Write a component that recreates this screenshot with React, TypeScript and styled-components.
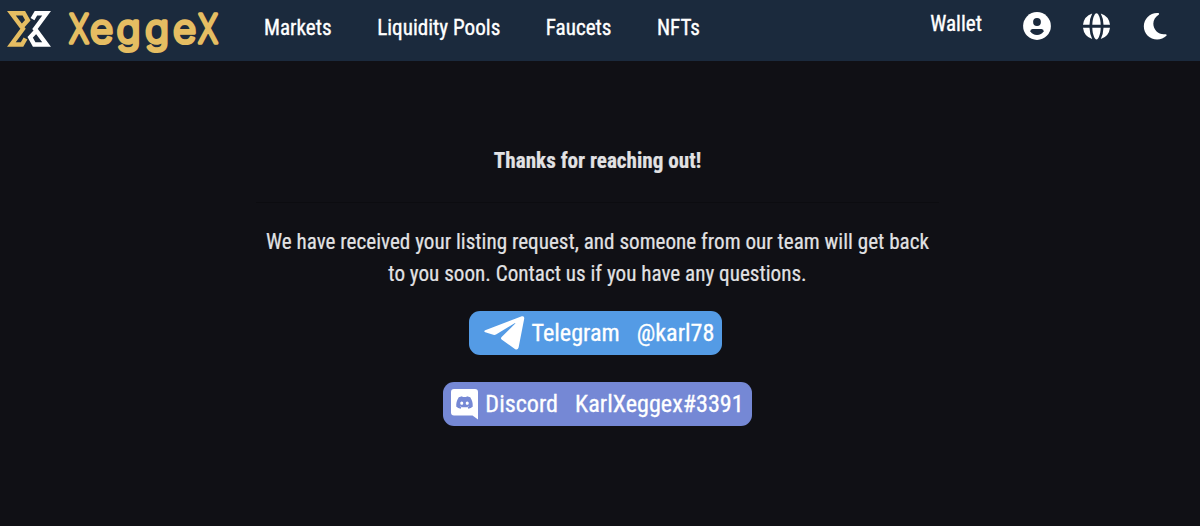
import styled, { createGlobalStyle } from 'styled-components';
import { FaDiscord } from 'react-icons/fa';
import { FaMoon } from 'react-icons/fa6';

const markPath = 'M15.200 15.500L20.800 9.300L16.800 2.200H4.400L16 17.800L4.400 33.500H15L18.500 27.500';

function LogoMark() {
  return (
    <svg width="44" height="36" viewBox="0 0 44 36" fill="none" strokeWidth="4.4">
      <path stroke="#e5bd62" d={markPath} />
      <path stroke="#fff" transform="rotate(180 22 17.85)" d={markPath} />
    </svg>
  );
}

function UserIcon() {
  return (
    <svg width="28" height="28" viewBox="0 0 28 28">
      <circle cx="14" cy="14" r="13.900" fill="#fff" />
      <circle cx="14" cy="10" r="3.900" fill="#1b2a3d" />
      <path fill="#1b2a3d" d="M9.500 17H18.500Q21 17.300 20.600 19.200Q18.500 23 14 23Q9.500 23 7.400 19.200Q7 17.300 9.500 17Z" />
    </svg>
  );
}

function GlobeIcon() {
  return (
    <svg width="27" height="27" viewBox="0 0 27 27" fill="#fff">
      <path d="M0 11.800A13.500 13.500 0 0 1 9.200 0.500Q6.800 5 6.500 11.800Z" />
      <path d="M27 11.800A13.500 13.500 0 0 0 17.800 0.500Q20.200 5 20.500 11.800Z" />
      <path d="M9.300 11.800C9.500 5 11.500 0.200 13.500 0.200S17.500 5 17.700 11.800Z" />
      <path d="M0 14.800A13.500 13.500 0 0 0 9.200 26.100Q6.800 21.500 6.500 14.800Z" />
      <path d="M27 14.800A13.500 13.500 0 0 1 17.800 26.100Q20.200 21.500 20.500 14.800Z" />
      <path d="M9.300 14.800C9.500 21.500 11.500 26.400 13.500 26.400S17.500 21.500 17.700 14.800Z" />
    </svg>
  );
}

function TelegramIcon() {
  return (
    <svg width="41" height="34" viewBox="0 0 41 34" fill="#fff">
      <path d="M1.200 14.200L37.800 0.300Q40.600 -0.300 40.200 2.700L34.600 31.600Q33.600 34.600 30.900 33L17.600 23.400Q16.300 22.300 17.600 21L31.300 7.600Q31.600 6.900 30.600 7.200L12 18.600Q10.700 19.200 9.300 18.800L1.200 16.300Q-0.700 15.300 1.200 14.200Z" />
    </svg>
  );
}

function DiscordIcon() {
  return (
    <svg width="27" height="31" viewBox="0 0 27 31">
      <path fill="#fff" d="M3 0H24Q27 0 27 3V30.500L21.500 26.500H3Q0 26.500 0 23.500V3Q0 0 3 0Z" />
      <FaDiscord x="4.5" y="4.5" size={18} color="#7588d5" />
    </svg>
  );
}

function App() {
  return (
    <>
      <GlobalStyle />
      <Header>
        <Logo>
          <LogoMark />
          <Wordmark width="160" height="58" viewBox="0 0 160 58">
            <text y="42.600">
              <tspan x="6" textLength="20" lengthAdjust="spacingAndGlyphs">X</tspan>
              <tspan x="27">e</tspan>
              <tspan x="53.500">g</tspan>
              <tspan x="82">g</tspan>
              <tspan x="110">e</tspan>
              <tspan x="135" textLength="20" lengthAdjust="spacingAndGlyphs">X</tspan>
            </text>
          </Wordmark>
        </Logo>
        <Nav>
          <NavLink>Markets</NavLink>
          <NavLink>Liquidity Pools</NavLink>
          <NavLink>Faucets</NavLink>
          <NavLink>NFTs</NavLink>
        </Nav>
        <Tools>
          <Wallet>Wallet</Wallet>
          <UserIcon />
          <GlobeIcon />
          <Moon size={30.5} />
        </Tools>
      </Header>
      <Main>
        <Title>Thanks for reaching out!</Title>
        <Divider />
        <Message>
          We have received your listing request, and someone from our team will get back to you soon.
          Contact us if you have any questions.
        </Message>
        <Contact $color="#549be5" $pad="0 8px 0 15px" $shift={-4}>
          <TelegramIcon />
          <span>Telegram</span>
          <Handle>@karl78</Handle>
        </Contact>
        <Contact $color="#7588d5" $pad="0 8px">
          <DiscordIcon />
          <span>Discord</span>
          <Handle>KarlXeggex#3391</Handle>
        </Contact>
      </Main>
    </>
  );
}

const GlobalStyle = createGlobalStyle`
  * {
    box-sizing: border-box;
  }

  body {
    margin: 0;
    background: #101015;
    color: #e2e2e4;
    font-family: Roboto, sans-serif;
    font-stretch: 75%;
    -webkit-text-stroke: 0.2px;
  }
`;

const Header = styled.header`
  height: 61px;
  padding: 0 30px 0 7px;
  background: #1b2a3d;
  display: flex;
  align-items: center;
`;

const Logo = styled.div`
  display: flex;
  align-items: center;
  gap: 12px;
  padding-bottom: 3px;
`;

const Wordmark = styled.svg`
  overflow: visible;

  text {
    font-family: Inter, sans-serif;
    font-size: 40px;
    font-weight: 300;
    fill: #e5bd62;
    stroke: #e5bd62;
    stroke-width: 3.4;
    stroke-linejoin: round;
  }
`;

const Nav = styled.nav`
  display: flex;
  gap: 45.5px;
  margin-left: 41px;
  padding-bottom: 6px;
`;

const NavLink = styled.a`
  font-size: 21.15px;
  font-weight: 450;
  color: #fff;
  -webkit-text-stroke: 0.35px;
`;

const Tools = styled.div`
  display: flex;
  align-items: center;
  margin-left: auto;
  padding-bottom: 9px;
  gap: 32.5px;
  color: #fff;
`;

const Wallet = styled(NavLink)`
  margin-right: 8px;
  padding-bottom: 6px;
`;

const Moon = styled(FaMoon)`
  margin-left: -3px;
`;

const Main = styled.main`
  width: 683px;
  margin: 0 auto;
  padding-top: 84px;
  display: flex;
  flex-direction: column;
  align-items: center;
  position: relative;
  left: -2.5px;
`;

const Title = styled.h5`
  margin: 0;
  font-size: 21.15px;
  line-height: 32px;
`;

const Divider = styled.hr`
  width: 100%;
  height: 1px;
  margin: 25px 0 23px;
  border: 0;
  background: #0c0c10;
`;

const Message = styled.p`
  margin: 0 0 21px;
  font-size: 21.15px;
  line-height: 32px;
  text-align: center;
`;

const Contact = styled.a<{ $color: string; $pad: string; $shift?: number }>`
  height: 44px;
  margin-bottom: 27px;
  margin-left: ${({ $shift }) => $shift ?? 0}px;
  padding: ${({ $pad }) => $pad};
  display: flex;
  align-items: center;
  gap: 7px;
  border-radius: 11px;
  background: ${({ $color }) => $color};
  color: #fff;
  font-size: 24.15px;
  -webkit-text-stroke: 0.3px;
`;

const Handle = styled.span`
  margin-left: 10px;
`;

export default App;
